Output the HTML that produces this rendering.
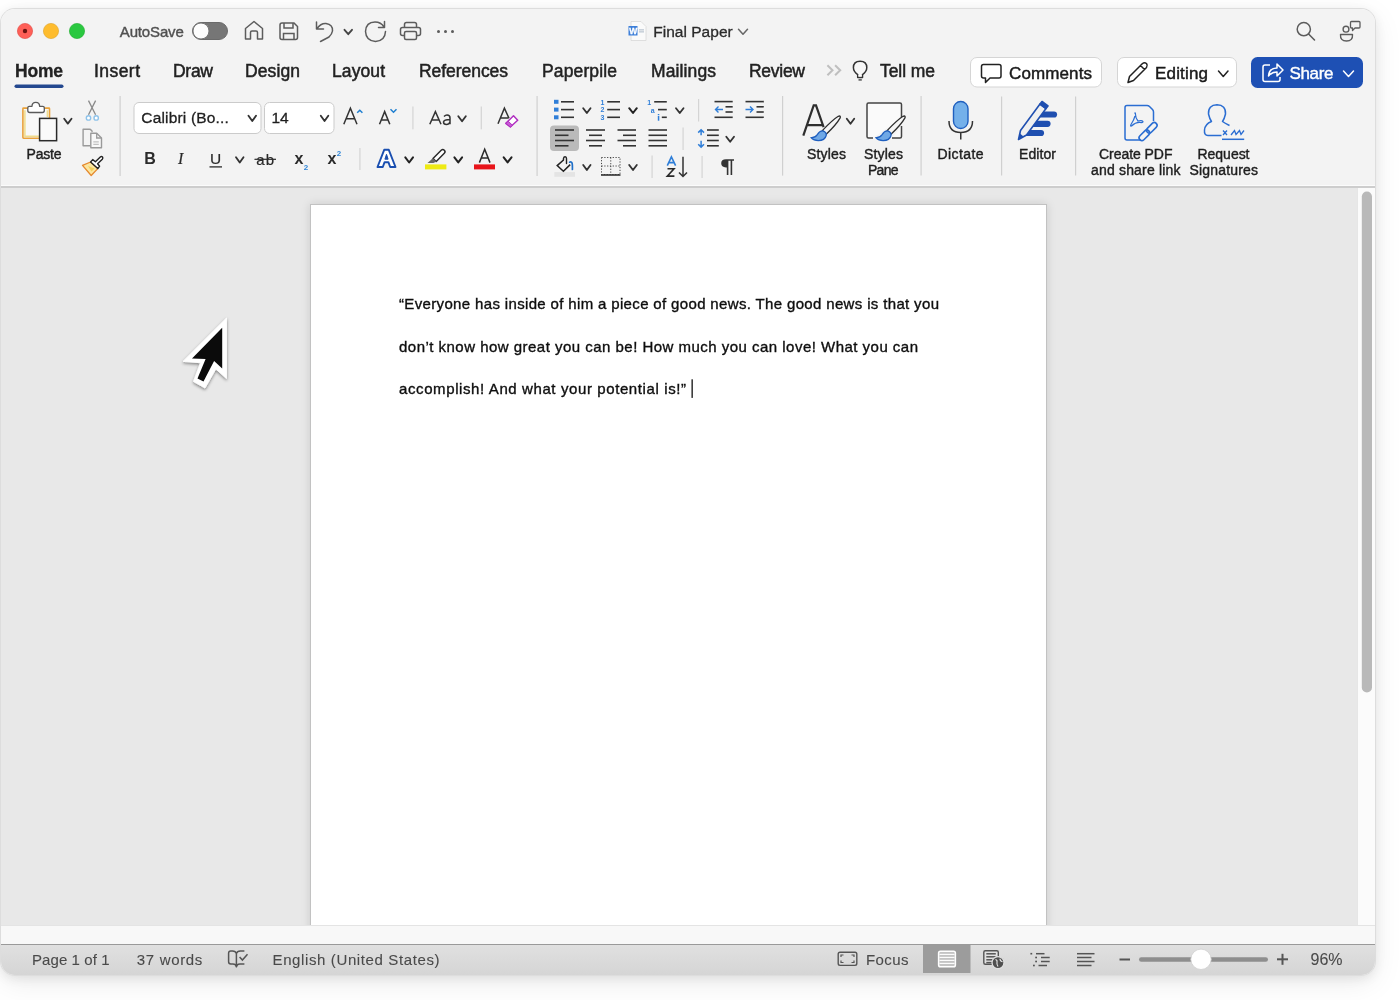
<!DOCTYPE html>
<html><head><meta charset="utf-8">
<style>
*{margin:0;padding:0;box-sizing:border-box}
html,body{width:1400px;height:1000px;overflow:hidden;background:#fff}
#shadow{position:absolute;left:1px;top:9px;width:1374px;height:966px;border-radius:14px;box-shadow:0 0 0 1px #dddddd,0 3px 12px rgba(0,0,0,.09),0 8px 30px rgba(0,0,0,.08)}
#win{position:absolute;left:1px;top:9px;width:1374px;height:966px;border-radius:14px;background:#f3f3f3;overflow:hidden}
#in{position:absolute;left:-1px;top:-9px;width:1400px;height:1000px}
.b{position:absolute}
svg{position:absolute;left:0;top:0;will-change:transform}
text{font-family:"Liberation Sans", sans-serif}
</style></head><body>
<div id="shadow"></div>
<div id="win"><div id="in">
<div class="b" style="left:0;top:185px;width:1400px;height:1px;background:#fbfbfb"></div>
<div class="b" style="left:0;top:186px;width:1400px;height:2px;background:#cdcdcd"></div>
<div class="b" style="left:0;top:188px;width:1357px;height:737px;background:#e8e8e8"></div>
<div class="b" style="left:1357px;top:188px;width:43px;height:737px;background:#fbfbfb;border-left:1px solid #e6e6e6"></div>
<div class="b" style="left:310px;top:204px;width:737px;height:740px;background:#fff;border:1px solid #c2c2c2;box-shadow:0 0 9px rgba(0,0,0,.13)"></div>
<div class="b" style="left:0;top:925px;width:1400px;height:19px;background:#f8f8f8;border-top:1px solid #e4e4e4"></div>
<div class="b" style="left:0;top:944px;width:1400px;height:31px;background:linear-gradient(#e0e0e0,#d5d5d5);border-top:1px solid #9a9a9a"></div>
<svg width="1400" height="1000" viewBox="0 0 1400 1000">
<defs><filter id="ptrsh" x="-50%" y="-50%" width="200%" height="200%"><feDropShadow dx="0" dy="1.5" stdDeviation="1.8" flood-color="#000" flood-opacity="0.45"/></filter></defs>
<circle cx="25" cy="31" r="7.6" fill="#fe5f57" stroke="#e0443e" stroke-width="0.6"/>
<circle cx="51" cy="31" r="7.6" fill="#febc2e" stroke="#dea123" stroke-width="0.6"/>
<circle cx="77" cy="31" r="7.6" fill="#2ac840" stroke="#1aab29" stroke-width="0.6"/>
<circle cx="25" cy="31" r="2.2" fill="#6b1410"/>
<text x="119.8" y="37" font-size="15" fill="#505050" font-weight="normal" text-anchor="start" textLength="64" lengthAdjust="spacing" stroke="#505050" stroke-width="0.4">AutoSave</text>
<rect x="192.5" y="22.5" width="35" height="17" rx="8.5" fill="#767676" stroke="#6a6a6a" stroke-width="1"/>
<circle cx="201" cy="31" r="8" fill="#fdfdfd" stroke="#777" stroke-width="1"/>
<path d="M245.5 39V28.5L254 21.5L262.5 28.5V39H257.5V32.5Q257.5 31 256 31H252Q250.5 31 250.5 32.5V39Z" fill="none" stroke="#5c5c5c" stroke-width="1.5" stroke-linejoin="round"/>
<path d="M282 23H294L297.5 26.5V37.5Q297.5 39.5 295.5 39.5H282Q280 39.5 280 37.5V25Q280 23 282 23Z" fill="none" stroke="#5c5c5c" stroke-width="1.5"/>
<path d="M284 23V28H293V23M283.5 39.5V33.5H294V39.5" fill="none" stroke="#5c5c5c" stroke-width="1.5"/>
<path d="M316.5 22V29H323.5M317 28.5Q321 23 326 23.5Q333 24.5 332.5 31Q332 34 329 37L320.5 41.5" fill="none" stroke="#5c5c5c" stroke-width="1.5" stroke-linecap="round" stroke-linejoin="round"/>
<path d="M344.5 29.8L348.25 34.2L352 29.8" fill="none" stroke="#444" stroke-width="1.85" stroke-linecap="round" stroke-linejoin="round"/>
<path d="M384 27Q381 22 375 22Q366 22 365.5 31.5Q366 41 375.5 41.5Q385 41 385.5 31.5M384.5 21.5V27.5H378.5" fill="none" stroke="#5c5c5c" stroke-width="1.5" stroke-linecap="round" stroke-linejoin="round"/>
<path d="M404.5 27.5V24.5Q404.5 22.5 406.5 22.5H414.5Q416.5 22.5 416.5 24.5V27.5M404 35.5H402.5Q400.5 35.5 400.5 33.5V29.5Q400.5 27.5 402.5 27.5H418.5Q420.5 27.5 420.5 29.5V33.5Q420.5 35.5 418.5 35.5H417" fill="none" stroke="#5c5c5c" stroke-width="1.5" stroke-linejoin="round"/>
<rect x="404.5" y="31.5" width="12" height="8" rx="1.5" fill="none" stroke="#5c5c5c" stroke-width="1.5"/>
<circle cx="438.5" cy="31.5" r="1.5" fill="#5c5c5c"/>
<circle cx="445.5" cy="31.5" r="1.5" fill="#5c5c5c"/>
<circle cx="452.5" cy="31.5" r="1.5" fill="#5c5c5c"/>
<path d="M631 21.5H641L646 26.5V40.5H631Z" fill="#fafafa" stroke="#d8d8d8" stroke-width="0.8"/>
<rect x="628.5" y="26" width="9" height="9.5" fill="#3d7fd9"/>
<text x="629.3" y="34.3" font-size="8.5" fill="#fff" font-weight="bold" text-anchor="start" stroke="#fff" stroke-width="0.3">W</text>
<rect x="639" y="29.5" width="5" height="0.8" fill="#9ab"/><rect x="639" y="31.5" width="5" height="0.8" fill="#9ab"/>
<text x="653.2" y="37.3" font-size="15.5" fill="#2a2a2a" font-weight="normal" text-anchor="start" textLength="79.5" lengthAdjust="spacing" stroke="#2a2a2a" stroke-width="0.3">Final Paper</text>
<path d="M738.5 29.3L743.0 34.3L747.5 29.3" fill="none" stroke="#666" stroke-width="1.5" stroke-linecap="round" stroke-linejoin="round"/>
<circle cx="1303.8" cy="29.2" r="6.6" fill="none" stroke="#5c5c5c" stroke-width="1.5"/>
<line x1="1308.6" y1="34" x2="1314.5" y2="40" stroke="#5c5c5c" stroke-width="1.6" stroke-linecap="round"/>
<circle cx="1346" cy="29.2" r="2.9" fill="none" stroke="#5c5c5c" stroke-width="1.4"/>
<path d="M1340.5 34.5H1352.5Q1353 41 1346.5 41Q1340 41 1340.5 34.5Z" fill="none" stroke="#5c5c5c" stroke-width="1.4" stroke-linejoin="round"/>
<path d="M1351.5 21.5H1359Q1360 21.5 1360 22.5V27Q1360 28 1359 28H1355L1352.5 30.5V28H1351.5Q1350.5 28 1350.5 27V22.5Q1350.5 21.5 1351.5 21.5Z" fill="none" stroke="#5c5c5c" stroke-width="1.3" stroke-linejoin="round"/>
<text x="15" y="77" font-size="17.5" fill="#222" font-weight="bold" text-anchor="start" textLength="48" lengthAdjust="spacing" stroke="#222" stroke-width="0.3">Home</text>
<rect x="14.5" y="84.5" width="49" height="3.5" rx="1.75" fill="#24488f"/>
<text x="94" y="77" font-size="17.5" fill="#222" font-weight="normal" text-anchor="start" textLength="46" lengthAdjust="spacing" stroke="#222" stroke-width="0.5">Insert</text>
<text x="173" y="77" font-size="17.5" fill="#222" font-weight="normal" text-anchor="start" textLength="40" lengthAdjust="spacing" stroke="#222" stroke-width="0.5">Draw</text>
<text x="245" y="77" font-size="17.5" fill="#222" font-weight="normal" text-anchor="start" textLength="55" lengthAdjust="spacing" stroke="#222" stroke-width="0.5">Design</text>
<text x="332" y="77" font-size="17.5" fill="#222" font-weight="normal" text-anchor="start" textLength="53" lengthAdjust="spacing" stroke="#222" stroke-width="0.5">Layout</text>
<text x="419" y="77" font-size="17.5" fill="#222" font-weight="normal" text-anchor="start" textLength="89" lengthAdjust="spacing" stroke="#222" stroke-width="0.5">References</text>
<text x="542" y="77" font-size="17.5" fill="#222" font-weight="normal" text-anchor="start" textLength="75" lengthAdjust="spacing" stroke="#222" stroke-width="0.5">Paperpile</text>
<text x="651" y="77" font-size="17.5" fill="#222" font-weight="normal" text-anchor="start" textLength="65" lengthAdjust="spacing" stroke="#222" stroke-width="0.5">Mailings</text>
<text x="749" y="77" font-size="17.5" fill="#222" font-weight="normal" text-anchor="start" textLength="56" lengthAdjust="spacing" stroke="#222" stroke-width="0.5">Review</text>
<text x="880" y="77" font-size="17.5" fill="#222" font-weight="normal" text-anchor="start" textLength="55" lengthAdjust="spacing" stroke="#222" stroke-width="0.5">Tell me</text>
<path d="M827.4 65.3L832.5 70.3L827.4 75.3M835.1 65.3L840.2 70.3L835.1 75.3" fill="none" stroke="#bfbfbf" stroke-width="2"/>
<path d="M857.7 77.6V74.6Q853.4 71.6 853.4 67.6Q853.4 61.2 860.1 61.2Q866.8 61.2 866.8 67.6Q866.8 71.6 862.5 74.6V77.6Z" fill="#f7f7f7" stroke="#333" stroke-width="1.5" stroke-linejoin="round"/>
<line x1="858.4" y1="75.8" x2="861.8" y2="75.8" stroke="#fff" stroke-width="1.2" stroke-linecap="butt"/>
<line x1="858.5" y1="79.9" x2="861.8" y2="79.9" stroke="#444" stroke-width="1.4" stroke-linecap="butt"/>
<rect x="970.5" y="57.5" width="131" height="29.5" rx="6.5" fill="#fff" stroke="#d5d5d5" stroke-width="1"/>
<path d="M983.5 64.5H999Q1001 64.5 1001 66.5V76Q1001 78 999 78H990L985.5 82.5V78H983.5Q981.5 78 981.5 76V66.5Q981.5 64.5 983.5 64.5Z" fill="none" stroke="#222" stroke-width="1.5" stroke-linejoin="round"/>
<text x="1009" y="79" font-size="17" fill="#1a1a1a" font-weight="normal" text-anchor="start" textLength="83" lengthAdjust="spacing" stroke="#1a1a1a" stroke-width="0.45">Comments</text>
<rect x="1117.5" y="57.5" width="119" height="29.5" rx="6.5" fill="#fff" stroke="#d5d5d5" stroke-width="1"/>
<path d="M1128 82.5L1129.5 76.5L1142.5 63.5Q1144.5 62 1146.5 63.5Q1148 65.5 1146.5 67.5L1133.5 80.5Z M1140.5 65.5L1144.5 69.5" fill="none" stroke="#222" stroke-width="1.5" stroke-linejoin="round"/>
<text x="1155" y="79" font-size="17" fill="#1a1a1a" font-weight="normal" text-anchor="start" textLength="53" lengthAdjust="spacing" stroke="#1a1a1a" stroke-width="0.45">Editing</text>
<path d="M1218.5 71L1223.25 76.5L1228 71" fill="none" stroke="#222" stroke-width="1.5" stroke-linecap="round" stroke-linejoin="round"/>
<rect x="1251" y="57" width="112" height="31" rx="6.5" fill="#1e50b4"/>
<path d="M1270 65H1265Q1263 65 1263 67V79.5Q1263 81.5 1265 81.5H1278Q1280 81.5 1280 79.5V77" fill="none" stroke="#fff" stroke-width="1.5" stroke-linejoin="round"/>
<path d="M1268.5 76Q1269 68 1277 68V64L1283 70L1277 76V72Q1271.5 72 1268.5 76Z" fill="none" stroke="#fff" stroke-width="1.5" stroke-linejoin="round"/>
<text x="1289.5" y="79" font-size="17" fill="#fff" font-weight="normal" text-anchor="start" textLength="44" lengthAdjust="spacing" stroke="#fff" stroke-width="0.4">Share</text>
<path d="M1343.5 71L1348.5 76.5L1353.5 71" fill="none" stroke="#fff" stroke-width="1.5" stroke-linecap="round" stroke-linejoin="round"/>
<rect x="22.9" y="108.1" width="26.6" height="30.1" rx="0.6" fill="#f8f8f8" stroke="#e9a23b" stroke-width="1.6"/>
<path d="M24.9 110.2V136.2H39M47.4 110.2V117" fill="none" stroke="#efdc8c" stroke-width="1.5"/>
<path d="M27.8 107.8V110.5Q27.8 112.5 29.8 112.5H42.3Q44.3 112.5 44.3 110.5V107.8Q44.3 106.3 42.8 106.3H39.6Q39.6 102.3 35.8 102.3Q32 102.3 32 106.3H29.3Q27.8 106.3 27.8 107.8Z" fill="#fff" stroke="#5a5a5a" stroke-width="1.3" stroke-linejoin="round"/>
<rect x="39.6" y="118.4" width="17" height="22.3" fill="#fafafa" stroke="#2a2a2a" stroke-width="1.5"/>
<path d="M64.2 118.8L67.85 123.6L71.5 118.8" fill="none" stroke="#333" stroke-width="1.85" stroke-linecap="round" stroke-linejoin="round"/>
<text x="26.5" y="159.2" font-size="14" fill="#1e1e1e" font-weight="normal" text-anchor="start" textLength="35" lengthAdjust="spacing" stroke="#1e1e1e" stroke-width="0.4">Paste</text>
<path d="M88.5 100.6L95.6 114.8M95.6 100.6L88.5 114.8" stroke="#8a8a8a" stroke-width="1.3" fill="none"/>
<circle cx="88.5" cy="117.9" r="2.2" fill="#fff" stroke="#8fc3ea" stroke-width="1.4"/><circle cx="96.2" cy="117.9" r="2.2" fill="#fff" stroke="#8fc3ea" stroke-width="1.4"/>
<path d="M90 145.7H83.1V129.3H89.5Q90.5 129.3 91.5 130.5L92.5 131.8" fill="none" stroke="#9a9a9a" stroke-width="1.4" stroke-linejoin="round"/>
<path d="M90.8 133.2H96.7L101.5 138V147.8H90.8Z" fill="#f8f8f8" stroke="#9a9a9a" stroke-width="1.4" stroke-linejoin="round"/>
<path d="M96.7 133.2V138H101.5" fill="none" stroke="#9a9a9a" stroke-width="1.3"/>
<path d="M93.3 141.9H98.8M93.3 144.3H98.8" stroke="#aaa" stroke-width="0.9"/>
<path d="M90.6 162L82.5 165.3L91.2 175.5L97.8 168.6Z" fill="#fbe6a0" stroke="#e5892e" stroke-width="1.3" stroke-linejoin="round"/>
<path d="M88 166L91.5 171.5L94.5 168.5Z" fill="#f4cf5a"/>
<path d="M90.6 162L92.7 159.6L95.4 161.8L100.3 157Q101.5 156 102.5 157Q103.3 158 102.3 159.2L97.6 163.8L99.6 166.2L97.8 168.6Z" fill="#fff" stroke="#222" stroke-width="1.4" stroke-linejoin="round"/>
<rect x="119.5" y="96" width="1.2" height="80" fill="#cfcfcf"/>
<rect x="134" y="102.5" width="127" height="31" rx="5" fill="#fff" stroke="#cbcbcb" stroke-width="1"/>
<text x="141.3" y="123.3" font-size="15.5" fill="#1e1e1e" font-weight="normal" text-anchor="start" textLength="87.5" lengthAdjust="spacing" stroke="#1e1e1e" stroke-width="0.3">Calibri (Bo...</text>
<path d="M248.5 115.8L252.25 121L256 115.8" fill="none" stroke="#333" stroke-width="1.85" stroke-linecap="round" stroke-linejoin="round"/>
<rect x="264.5" y="102.5" width="69.5" height="31" rx="5" fill="#fff" stroke="#cbcbcb" stroke-width="1"/>
<text x="271.5" y="123.3" font-size="15.5" fill="#1e1e1e" font-weight="normal" text-anchor="start" stroke="#1e1e1e" stroke-width="0.3">14</text>
<path d="M320.8 115.8L324.55 121L328.3 115.8" fill="none" stroke="#333" stroke-width="1.85" stroke-linecap="round" stroke-linejoin="round"/>
<path d="M343.8 124.3L350.4 108.2L357 124.3M346.044 118.826H354.756" fill="none" stroke="#333" stroke-width="1.5" stroke-linejoin="miter"/>
<path d="M357.2 112.8L359.8 110.2L362.4 112.8" fill="none" stroke="#1f7fd0" stroke-width="1.5"/>
<path d="M379.5 124.3L384.65 111.6L389.8 124.3M381.251 119.982H388.049" fill="none" stroke="#333" stroke-width="1.5" stroke-linejoin="miter"/>
<path d="M390.5 109.3L393.5 112.3L396.5 109.3" fill="none" stroke="#1f7fd0" stroke-width="1.5"/>
<rect x="412.3" y="106.5" width="1.2" height="22.80000000000001" fill="#d4d4d4"/>
<path d="M429.8 124.3L435.4 111.6L441 124.3M431.704 119.982H439.096" fill="none" stroke="#333" stroke-width="1.5" stroke-linejoin="miter"/>
<path d="M444 116.5Q445.5 115 447 115Q450 115 450 118V124.3M450 119.5Q444 119.5 443.5 122Q443.5 124.5 446.5 124.5Q449 124.5 450 122" fill="none" stroke="#333" stroke-width="1.5"/>
<path d="M458.3 116.3L462.05 121.2L465.8 116.3" fill="none" stroke="#333" stroke-width="1.85" stroke-linecap="round" stroke-linejoin="round"/>
<rect x="480.7" y="106.5" width="1.2" height="22.80000000000001" fill="#d4d4d4"/>
<path d="M498 123.8L504.4 108.2L509 118.2M500.8 118H508.5" fill="none" stroke="#333" stroke-width="1.5"/>
<path d="M513.5 115.8L517.7 120.3L510.3 127L505.8 123.4Z" fill="#fff" stroke="#b02fc0" stroke-width="1.5" stroke-linejoin="round"/>
<path d="M508.2 121.2L512.6 125.4L510.3 127L505.8 123.4Z" fill="#c85ad6" stroke="#b02fc0" stroke-width="1"/>
<text x="144.2" y="164.2" font-size="16" fill="#2a2a2a" font-weight="bold" text-anchor="start">B</text>
<text x="178" y="164.2" font-size="16" fill="#2a2a2a" font-weight="normal" text-anchor="start" stroke="#2a2a2a" stroke-width="0.2" style="font-family:Liberation Serif;font-style:italic">I</text>
<text x="210" y="164.2" font-size="15.5" fill="#2a2a2a" font-weight="normal" text-anchor="start" stroke="#2a2a2a" stroke-width="0.2">U</text>
<line x1="209.5" y1="166.9" x2="222" y2="166.9" stroke="#2a2a2a" stroke-width="1.3" stroke-linecap="butt"/>
<path d="M236 157.2L239.75 162.5L243.5 157.2" fill="none" stroke="#333" stroke-width="1.85" stroke-linecap="round" stroke-linejoin="round"/>
<text x="256.2" y="164.5" font-size="15" fill="#2a2a2a" font-weight="normal" text-anchor="start" textLength="18" lengthAdjust="spacing" stroke="#2a2a2a" stroke-width="0.2">ab</text>
<line x1="254.5" y1="159.3" x2="276" y2="159.3" stroke="#2a2a2a" stroke-width="1.2" stroke-linecap="butt"/>
<text x="294.5" y="164" font-size="16" fill="#2a2a2a" font-weight="bold" text-anchor="start">x</text>
<text x="303.8" y="169.6" font-size="8" fill="#2f86d8" font-weight="bold" text-anchor="start">2</text>
<text x="327.5" y="164" font-size="16" fill="#2a2a2a" font-weight="bold" text-anchor="start">x</text>
<text x="336.8" y="155.6" font-size="8" fill="#2f86d8" font-weight="bold" text-anchor="start">2</text>
<rect x="359.3" y="148" width="1.2" height="22" fill="#d4d4d4"/>
<path d="M377.5 167H382.8L384.6 162.2H388.4L390.2 167H395.5L388.8 149.8H384.2Z" fill="#fff" stroke="#1a4fb0" stroke-width="1.9" stroke-linejoin="round"/>
<path d="M384.9 159.2L386.5 154.3L388.1 159.2Z" fill="#1a4fb0" stroke="#1a4fb0" stroke-width="1"/>
<path d="M405.3 157.3L409.15 162.5L413 157.3" fill="none" stroke="#222" stroke-width="2" stroke-linecap="round" stroke-linejoin="round"/>
<path d="M433 158.5L441.2 150.3Q442.8 148.8 444.3 150.3Q445.8 151.8 444.3 153.3L436.2 161.5Z" fill="#fff" stroke="#2a2a2a" stroke-width="1.5" stroke-linejoin="round"/>
<path d="M432.8 158.2L427.5 163H433.5L436.5 161.5Z" fill="#666"/>
<rect x="425" y="164.4" width="21.4" height="5" fill="#eeea14"/>
<path d="M454.4 157.3L458.25 162.4L462.1 157.3" fill="none" stroke="#222" stroke-width="2" stroke-linecap="round" stroke-linejoin="round"/>
<path d="M479.4 162.6L484.7 149.2L490 162.6M481.202 158.04399999999998H488.198" fill="none" stroke="#2a2a2a" stroke-width="1.5" stroke-linejoin="miter"/>
<rect x="474" y="164.4" width="21" height="5" fill="#e8141a"/>
<path d="M503.7 157.3L507.6 162.4L511.5 157.3" fill="none" stroke="#222" stroke-width="2" stroke-linecap="round" stroke-linejoin="round"/>
<rect x="536.5" y="96" width="1.2" height="80" fill="#d0d0d0"/>
<rect x="554" y="99.8" width="4.5" height="4" fill="#2f7ed8"/>
<line x1="561" y1="101.8" x2="574" y2="101.8" stroke="#333" stroke-width="1.6" stroke-linecap="butt"/>
<rect x="554" y="107.6" width="4.5" height="4" fill="#2f7ed8"/>
<line x1="561" y1="109.6" x2="574" y2="109.6" stroke="#333" stroke-width="1.6" stroke-linecap="butt"/>
<rect x="554" y="115.3" width="4.5" height="4" fill="#2f7ed8"/>
<line x1="561" y1="117.3" x2="574" y2="117.3" stroke="#333" stroke-width="1.6" stroke-linecap="butt"/>
<path d="M583.2 108.2L586.85 113L590.5 108.2" fill="none" stroke="#333" stroke-width="1.85" stroke-linecap="round" stroke-linejoin="round"/>
<text x="600.6" y="104.5" font-size="7" fill="#2f7ed8" font-weight="bold" text-anchor="start">1</text>
<line x1="607.2" y1="101.8" x2="620" y2="101.8" stroke="#333" stroke-width="1.6" stroke-linecap="butt"/>
<text x="600.6" y="112.3" font-size="7" fill="#2f7ed8" font-weight="bold" text-anchor="start">2</text>
<line x1="607.2" y1="109.6" x2="620" y2="109.6" stroke="#333" stroke-width="1.6" stroke-linecap="butt"/>
<text x="600.6" y="120.0" font-size="7" fill="#2f7ed8" font-weight="bold" text-anchor="start">3</text>
<line x1="607.2" y1="117.3" x2="620" y2="117.3" stroke="#333" stroke-width="1.6" stroke-linecap="butt"/>
<path d="M629.2 108.2L633.0 113L636.8 108.2" fill="none" stroke="#222" stroke-width="2" stroke-linecap="round" stroke-linejoin="round"/>
<text x="647.3" y="104.7" font-size="7" fill="#2f7ed8" font-weight="bold" text-anchor="start">1</text>
<text x="650.8" y="112.6" font-size="7" fill="#2f7ed8" font-weight="bold" text-anchor="start">a</text>
<rect x="657.8" y="116" width="1.5" height="4.7" fill="#2f7ed8"/><rect x="657.8" y="114" width="1.5" height="1.2" fill="#2f7ed8"/>
<line x1="654.2" y1="101.8" x2="666.8" y2="101.8" stroke="#333" stroke-width="1.6" stroke-linecap="butt"/>
<line x1="658" y1="109.6" x2="666.8" y2="109.6" stroke="#333" stroke-width="1.6" stroke-linecap="butt"/>
<line x1="661.8" y1="117.3" x2="666.8" y2="117.3" stroke="#333" stroke-width="1.6" stroke-linecap="butt"/>
<path d="M676 108.2L679.75 113L683.5 108.2" fill="none" stroke="#333" stroke-width="1.85" stroke-linecap="round" stroke-linejoin="round"/>
<rect x="698.0" y="99" width="1.2" height="22.5" fill="#d4d4d4"/>
<line x1="714.5" y1="101.6" x2="732.7" y2="101.6" stroke="#333" stroke-width="1.6" stroke-linecap="butt"/>
<line x1="725.5" y1="106.8" x2="732.7" y2="106.8" stroke="#333" stroke-width="1.6" stroke-linecap="butt"/>
<line x1="725.5" y1="112" x2="732.7" y2="112" stroke="#333" stroke-width="1.6" stroke-linecap="butt"/>
<line x1="714.5" y1="117.3" x2="732.7" y2="117.3" stroke="#333" stroke-width="1.6" stroke-linecap="butt"/>
<path d="M723 109.5H715.5M718.5 106.5L715.5 109.5L718.5 112.5" fill="none" stroke="#2f7ed8" stroke-width="1.4"/>
<line x1="745.5" y1="101.6" x2="763.8" y2="101.6" stroke="#333" stroke-width="1.6" stroke-linecap="butt"/>
<line x1="756.5" y1="106.8" x2="763.8" y2="106.8" stroke="#333" stroke-width="1.6" stroke-linecap="butt"/>
<line x1="756.5" y1="112" x2="763.8" y2="112" stroke="#333" stroke-width="1.6" stroke-linecap="butt"/>
<line x1="745.5" y1="117.3" x2="763.8" y2="117.3" stroke="#333" stroke-width="1.6" stroke-linecap="butt"/>
<path d="M745.5 109.5H753M750 106.5L753 109.5L750 112.5" fill="none" stroke="#2f7ed8" stroke-width="1.4"/>
<rect x="550" y="125.5" width="29" height="25.5" rx="4" fill="#bababa"/>
<line x1="555" y1="130" x2="574" y2="130" stroke="#333" stroke-width="1.6" stroke-linecap="butt"/>
<line x1="555" y1="135.3" x2="568.5" y2="135.3" stroke="#333" stroke-width="1.6" stroke-linecap="butt"/>
<line x1="555" y1="140.5" x2="574" y2="140.5" stroke="#333" stroke-width="1.6" stroke-linecap="butt"/>
<line x1="555" y1="145.8" x2="568.5" y2="145.8" stroke="#333" stroke-width="1.6" stroke-linecap="butt"/>
<line x1="586" y1="130" x2="605" y2="130" stroke="#333" stroke-width="1.6" stroke-linecap="butt"/>
<line x1="589" y1="135.3" x2="602" y2="135.3" stroke="#333" stroke-width="1.6" stroke-linecap="butt"/>
<line x1="586" y1="140.5" x2="605" y2="140.5" stroke="#333" stroke-width="1.6" stroke-linecap="butt"/>
<line x1="589" y1="145.8" x2="602" y2="145.8" stroke="#333" stroke-width="1.6" stroke-linecap="butt"/>
<line x1="617.5" y1="130" x2="636" y2="130" stroke="#333" stroke-width="1.6" stroke-linecap="butt"/>
<line x1="623" y1="135.3" x2="636" y2="135.3" stroke="#333" stroke-width="1.6" stroke-linecap="butt"/>
<line x1="617.5" y1="140.5" x2="636" y2="140.5" stroke="#333" stroke-width="1.6" stroke-linecap="butt"/>
<line x1="623" y1="145.8" x2="636" y2="145.8" stroke="#333" stroke-width="1.6" stroke-linecap="butt"/>
<line x1="648.5" y1="130" x2="667" y2="130" stroke="#333" stroke-width="1.6" stroke-linecap="butt"/>
<line x1="648.5" y1="135.3" x2="667" y2="135.3" stroke="#333" stroke-width="1.6" stroke-linecap="butt"/>
<line x1="648.5" y1="140.5" x2="667" y2="140.5" stroke="#333" stroke-width="1.6" stroke-linecap="butt"/>
<line x1="648.5" y1="145.8" x2="667" y2="145.8" stroke="#333" stroke-width="1.6" stroke-linecap="butt"/>
<rect x="682.5" y="127.5" width="1.2" height="22.5" fill="#d4d4d4"/>
<path d="M701.1 130V135.2M698.2 132.6L701.1 129.7L704 132.6M701.1 140.8V147M698.2 144.2L701.1 147.1L704 144.2" fill="none" stroke="#2f7ed8" stroke-width="1.5"/>
<line x1="707" y1="130" x2="718.8" y2="130" stroke="#333" stroke-width="1.6" stroke-linecap="butt"/>
<line x1="707" y1="135.3" x2="718.8" y2="135.3" stroke="#333" stroke-width="1.6" stroke-linecap="butt"/>
<line x1="707" y1="140.5" x2="718.8" y2="140.5" stroke="#333" stroke-width="1.6" stroke-linecap="butt"/>
<line x1="707" y1="145.8" x2="718.8" y2="145.8" stroke="#333" stroke-width="1.6" stroke-linecap="butt"/>
<path d="M726.3 136.7L730.15 141.8L734 136.7" fill="none" stroke="#333" stroke-width="1.85" stroke-linecap="round" stroke-linejoin="round"/>
<rect x="554.3" y="172.1" width="20.7" height="4.7" fill="#e4e4e4"/>
<path d="M563.5 160L557.2 165.6L563.4 171.3L570.2 164.6" fill="none" stroke="#222" stroke-width="1.5" stroke-linejoin="miter"/>
<path d="M563.5 160V158.4Q563.8 156.7 565.1 156.7Q566.5 156.7 566.5 158.5V163.5" fill="none" stroke="#222" stroke-width="1.4" stroke-linecap="round"/>
<path d="M569.6 162.2Q571.2 161.4 572.1 163.2Q572.5 164.5 572.4 169.5" fill="none" stroke="#1f6fc8" stroke-width="1.7" stroke-linecap="round"/>
<path d="M583.2 165L586.85 170L590.5 165" fill="none" stroke="#333" stroke-width="1.85" stroke-linecap="round" stroke-linejoin="round"/>
<rect x="601.5" y="157.5" width="18.5" height="17" fill="none" stroke="#444" stroke-width="1" stroke-dasharray="1.2 1.6"/>
<path d="M610.75 157.5V174.5M601.5 166H620" fill="none" stroke="#444" stroke-width="1" stroke-dasharray="1.2 1.6"/>
<line x1="601" y1="175" x2="620.5" y2="175" stroke="#333" stroke-width="1.6" stroke-linecap="butt"/>
<path d="M629.2 165L633.0 170L636.8 165" fill="none" stroke="#333" stroke-width="1.85" stroke-linecap="round" stroke-linejoin="round"/>
<rect x="651.5" y="155.5" width="1.2" height="22.5" fill="#d4d4d4"/>
<path d="M667.3 165.7L671.4 156.8L675.6 165.7M668.8 162.6H674.1" fill="none" stroke="#2f7ed8" stroke-width="1.6"/>
<path d="M667.5 168.8H674L667.3 176.1H674.4" fill="none" stroke="#2a2a2a" stroke-width="1.6"/>
<path d="M683 156.8V176.5M679 172.4L683 176.5L687 172.4" fill="none" stroke="#333" stroke-width="1.5"/>
<rect x="701.5" y="156" width="1.2" height="22" fill="#d4d4d4"/>
<path d="M734 159.2H726Q721.2 159.2 721.2 163.3Q721.2 167.4 726 167.4H726.8V175H728.4V160.7H730.6V175H732.2V160.7H734Z" fill="#333"/>
<rect x="782.0" y="96" width="1.2" height="79.6" fill="#d0d0d0"/>
<path d="M803.3 135.6L813.7 105.4H816L823.6 127.2M806.6 125.1H823.8" fill="none" stroke="#2e2e2e" stroke-width="2.2"/>
<path d="M822.3 130.6Q833 119.5 838.3 116.3Q840.6 115.3 840.3 117.6Q836.5 124.5 826.2 134.2Z" fill="#f6f6f6" stroke="#2e2e2e" stroke-width="1.3" stroke-linejoin="round"/>
<path d="M811 137.6Q815 138 817.3 134.6Q819.8 130.6 823 130.9Q826.8 132.3 826.2 135.5Q824.8 140.6 818.3 140.6Q813.8 140.6 811 137.6Z" fill="#6fa8e6" stroke="#1f5fbf" stroke-width="1.3" stroke-linejoin="round"/>
<path d="M846.8 118.8L850.5 123.8L854.2 118.8" fill="none" stroke="#333" stroke-width="1.85" stroke-linecap="round" stroke-linejoin="round"/>
<text x="807" y="158.8" font-size="14" fill="#1e1e1e" font-weight="normal" text-anchor="start" textLength="39" lengthAdjust="spacing" stroke="#1e1e1e" stroke-width="0.4">Styles</text>
<path d="M873 138H868.5Q867 138 867 136.5V104.5Q867 103 868.5 103H900Q901.5 103 901.5 104.5V118M901.5 126V136.5Q901.5 138 900 138H892" fill="#fafafa" stroke="#444" stroke-width="1.5"/>
<path d="M887.0999999999999 130.6Q897.8 119.5 903.0999999999999 116.3Q905.4 115.3 905.0999999999999 117.6Q901.3 124.5 891.0 134.2Z" fill="#f6f6f6" stroke="#2e2e2e" stroke-width="1.3" stroke-linejoin="round"/>
<path d="M875.8 137.6Q879.8 138 882.0999999999999 134.6Q884.5999999999999 130.6 887.8 130.9Q891.5999999999999 132.3 891.0 135.5Q889.5999999999999 140.6 883.0999999999999 140.6Q878.5999999999999 140.6 875.8 137.6Z" fill="#6fa8e6" stroke="#1f5fbf" stroke-width="1.3" stroke-linejoin="round"/>
<text x="864" y="158.8" font-size="14" fill="#1e1e1e" font-weight="normal" text-anchor="start" textLength="39" lengthAdjust="spacing" stroke="#1e1e1e" stroke-width="0.4">Styles</text>
<text x="868" y="174.5" font-size="14" fill="#1e1e1e" font-weight="normal" text-anchor="start" textLength="30.5" lengthAdjust="spacing" stroke="#1e1e1e" stroke-width="0.4">Pane</text>
<rect x="920.5" y="96" width="1.2" height="79.5" fill="#d0d0d0"/>
<rect x="953.5" y="101.5" width="14.5" height="27" rx="7.25" fill="#74b0ea" stroke="#1f5fbf" stroke-width="1.4"/>
<path d="M949 121Q949 132.5 960.75 132.5Q972.5 132.5 972.5 121M960.75 132.5V139.5" fill="none" stroke="#333" stroke-width="1.5"/>
<text x="937.5" y="159.2" font-size="14" fill="#1e1e1e" font-weight="normal" text-anchor="start" textLength="46" lengthAdjust="spacing" stroke="#1e1e1e" stroke-width="0.4">Dictate</text>
<rect x="1001.0" y="96.5" width="1.2" height="79.0" fill="#d0d0d0"/>
<line x1="1040" y1="114.5" x2="1054" y2="114.5" stroke="#1f4fb0" stroke-width="6.2" stroke-linecap="round"/>
<line x1="1033.5" y1="123.8" x2="1047.5" y2="123.8" stroke="#1f4fb0" stroke-width="6.2" stroke-linecap="round"/>
<line x1="1027" y1="133" x2="1041" y2="133" stroke="#1f4fb0" stroke-width="6.2" stroke-linecap="round"/>
<path d="M1018.5 139.5L1020.5 130.5L1040 104L1046 108.5L1026.5 135Z" fill="#f0f0f0" stroke="#1f4fb0" stroke-width="1.6" stroke-linejoin="round"/>
<path d="M1040 104L1042 101.5L1048 106L1046 108.5Z" fill="#1f4fb0" stroke="#1f4fb0" stroke-width="1.6" stroke-linejoin="round"/>
<path d="M1018.5 139.5L1020 133.5L1023.5 136.5Z" fill="#1f4fb0"/>
<text x="1019" y="159.2" font-size="14" fill="#1e1e1e" font-weight="normal" text-anchor="start" textLength="37" lengthAdjust="spacing" stroke="#1e1e1e" stroke-width="0.4">Editor</text>
<rect x="1075.0" y="96.5" width="1.2" height="79.0" fill="#d0d0d0"/>
<path d="M1141 140H1127Q1125 140 1125 138V107.5Q1125 105.5 1127 105.5H1147Q1148.5 105.5 1149.5 106.5L1152.5 109.5Q1153.5 110.5 1153.5 112V121" fill="none" stroke="#2a6dd2" stroke-width="1.5"/>
<path d="M1135 116Q1134 120 1131 124.5Q1130 126.5 1131.5 126Q1136 122 1140 122.5Q1143 123 1143 121.5Q1142 120 1138 121Q1135.5 118 1135.5 114.5Q1135.5 112 1134.5 113.5" fill="none" stroke="#2a6dd2" stroke-width="1.2"/>
<g transform="rotate(-45 1148 131.5)"><rect x="1136.5" y="128.8" width="12.5" height="5.6" rx="2.8" fill="none" stroke="#2a6dd2" stroke-width="1.6"/><rect x="1147" y="128.8" width="12.5" height="5.6" rx="2.8" fill="none" stroke="#2a6dd2" stroke-width="1.6"/></g>
<text x="1099" y="159.2" font-size="14" fill="#1e1e1e" font-weight="normal" text-anchor="start" textLength="73.5" lengthAdjust="spacing" stroke="#1e1e1e" stroke-width="0.4">Create PDF</text>
<text x="1091" y="174.8" font-size="14" fill="#1e1e1e" font-weight="normal" text-anchor="start" textLength="89.5" lengthAdjust="spacing" stroke="#1e1e1e" stroke-width="0.4">and share link</text>
<path d="M1229.5 125.5Q1224.5 123 1222.5 121.5Q1224.5 118.5 1225.5 114Q1226 105 1217 104.8Q1208 105 1208.5 114Q1209.5 118.5 1211.5 121.5Q1205 124 1204.5 130Q1204 135.5 1208 135.5H1221.5" fill="none" stroke="#2a6dd2" stroke-width="1.5" stroke-linejoin="round"/>
<path d="M1223 130.5L1227 135M1227 130.5L1223 135M1231 135L1234.5 130.5L1236 134.5L1239.5 130.5L1241 134.5L1244 130.5" fill="none" stroke="#2a6dd2" stroke-width="1.3"/>
<line x1="1222" y1="139.3" x2="1244.2" y2="139.3" stroke="#2a6dd2" stroke-width="1.5" stroke-linecap="butt"/>
<text x="1197.5" y="159.2" font-size="14" fill="#1e1e1e" font-weight="normal" text-anchor="start" textLength="52" lengthAdjust="spacing" stroke="#1e1e1e" stroke-width="0.4">Request</text>
<text x="1189.5" y="174.8" font-size="14" fill="#1e1e1e" font-weight="normal" text-anchor="start" textLength="68.5" lengthAdjust="spacing" stroke="#1e1e1e" stroke-width="0.4">Signatures</text>
<text x="399" y="309.4" font-size="15" fill="#0e0e0e" font-weight="normal" text-anchor="start" textLength="540" lengthAdjust="spacing" stroke="#0e0e0e" stroke-width="0.35">“Everyone has inside of him a piece of good news. The good news is that you</text>
<text x="399" y="351.8" font-size="15" fill="#0e0e0e" font-weight="normal" text-anchor="start" textLength="519" lengthAdjust="spacing" stroke="#0e0e0e" stroke-width="0.35">don’t know how great you can be! How much you can love! What you can</text>
<text x="399" y="394.2" font-size="15" fill="#0e0e0e" font-weight="normal" text-anchor="start" textLength="287" lengthAdjust="spacing" stroke="#0e0e0e" stroke-width="0.35">accomplish! And what your potential is!”</text>
<rect x="691.5" y="379.3" width="1.3" height="18.6" fill="#111"/>
<g filter="url(#ptrsh)"><path d="M226.5 318L226.5 378.5L215.8 369L205 388L193.5 381.5L200.5 362.7L183 361.4Z" fill="#fff" stroke="#fff" stroke-width="0.8" stroke-linejoin="round"/></g>
<path d="M222.2 327.8L222.2 368.6L214.1 361L203.5 381.4L197.5 378.4L205.6 358.9L192 358.4Z" fill="#0b0b0b"/>
<rect x="1361.8" y="191.5" width="10.2" height="501" rx="5.1" fill="#b9b9b9"/>
<text x="32" y="964.6" font-size="15" fill="#4a4a4a" font-weight="normal" text-anchor="start" textLength="77.5" lengthAdjust="spacing" stroke="#4a4a4a" stroke-width="0.1">Page 1 of 1</text>
<text x="136.8" y="964.6" font-size="15" fill="#4a4a4a" font-weight="normal" text-anchor="start" textLength="65.5" lengthAdjust="spacing" stroke="#4a4a4a" stroke-width="0.1">37 words</text>
<path d="M236.4 953.5Q235.6 951 232.5 951H230.8Q228.6 951 228.6 953.2V961.8Q228.6 964 230.8 964H233Q235.8 964 236.4 966.8Q237 964 239.8 964H244.4M236.4 953.5Q237.2 951 240.3 951H244.4M236.4 953.5V966" fill="none" stroke="#555" stroke-width="1.5" stroke-linejoin="round"/>
<path d="M239.6 956.9L242.4 960L247.5 954.2" fill="none" stroke="#555" stroke-width="1.5"/>
<text x="272.5" y="964.6" font-size="15" fill="#4a4a4a" font-weight="normal" text-anchor="start" textLength="167" lengthAdjust="spacing" stroke="#4a4a4a" stroke-width="0.1">English (United States)</text>
<rect x="838.2" y="952.2" width="18.6" height="13.2" rx="1.8" fill="none" stroke="#555" stroke-width="1.4"/>
<path d="M841 957V955H843.5M851.5 955H854V957M854 960.5V962.5H851.5M843.5 962.5H841V960.5" fill="none" stroke="#555" stroke-width="1.2"/>
<text x="866" y="964.6" font-size="15" fill="#4a4a4a" font-weight="normal" text-anchor="start" textLength="42.5" lengthAdjust="spacing" stroke="#4a4a4a" stroke-width="0.1">Focus</text>
<rect x="923" y="944.5" width="47.5" height="28.5" fill="#9c9c9c"/>
<rect x="938.6" y="951.2" width="16.8" height="15.6" rx="1.8" fill="#c4c4c4" stroke="#fff" stroke-width="1.5"/>
<line x1="939.5" y1="954.4" x2="954.5" y2="954.4" stroke="#fff" stroke-width="1.1" stroke-linecap="butt"/>
<line x1="939.5" y1="957.4" x2="954.5" y2="957.4" stroke="#fff" stroke-width="1.1" stroke-linecap="butt"/>
<line x1="939.5" y1="960.4" x2="954.5" y2="960.4" stroke="#fff" stroke-width="1.1" stroke-linecap="butt"/>
<line x1="939.5" y1="963.4" x2="954.5" y2="963.4" stroke="#fff" stroke-width="1.1" stroke-linecap="butt"/>
<rect x="983.8" y="950.8" width="14.5" height="13.4" rx="1.5" fill="#e2e2e2" stroke="#555" stroke-width="1.4"/>
<line x1="986.3" y1="953.8" x2="995.8" y2="953.8" stroke="#555" stroke-width="1.5" stroke-linecap="butt"/>
<line x1="986.3" y1="956.8" x2="995.8" y2="956.8" stroke="#555" stroke-width="1.5" stroke-linecap="butt"/>
<line x1="986.3" y1="959.8" x2="995.8" y2="959.8" stroke="#555" stroke-width="1.5" stroke-linecap="butt"/>
<line x1="986.3" y1="962.6" x2="995.8" y2="962.6" stroke="#555" stroke-width="1.5" stroke-linecap="butt"/>
<circle cx="998" cy="962.6" r="6" fill="#505050" stroke="#e0e0e0" stroke-width="1.3"/>
<path d="M995.5 959.5Q997.5 960 997 962Q996.5 964 998 966.5M1000 958.8Q999.8 961 1002.5 961.8" fill="none" stroke="#e8e8e8" stroke-width="1.1"/>
<rect x="1030.4" y="952.9000000000001" width="1.8" height="1.6" fill="#555"/>
<line x1="1036" y1="953.7" x2="1044.5" y2="953.7" stroke="#555" stroke-width="1.5" stroke-linecap="butt"/>
<rect x="1035.2" y="956.7" width="1.8" height="1.6" fill="#555"/>
<line x1="1041" y1="957.5" x2="1049.7" y2="957.5" stroke="#555" stroke-width="1.5" stroke-linecap="butt"/>
<rect x="1035.2" y="960.7" width="1.8" height="1.6" fill="#555"/>
<line x1="1041" y1="961.5" x2="1049.7" y2="961.5" stroke="#555" stroke-width="1.5" stroke-linecap="butt"/>
<rect x="1033" y="964.7" width="1.8" height="1.6" fill="#555"/>
<line x1="1038.5" y1="965.5" x2="1047" y2="965.5" stroke="#555" stroke-width="1.5" stroke-linecap="butt"/>
<line x1="1077" y1="953.7" x2="1094.5" y2="953.7" stroke="#555" stroke-width="1.5" stroke-linecap="butt"/>
<line x1="1077" y1="957.5" x2="1091.5" y2="957.5" stroke="#555" stroke-width="1.5" stroke-linecap="butt"/>
<line x1="1077" y1="961.5" x2="1094.5" y2="961.5" stroke="#555" stroke-width="1.5" stroke-linecap="butt"/>
<line x1="1077" y1="965.5" x2="1091.5" y2="965.5" stroke="#555" stroke-width="1.5" stroke-linecap="butt"/>
<line x1="1119.5" y1="959.5" x2="1130" y2="959.5" stroke="#555" stroke-width="2" stroke-linecap="butt"/>
<rect x="1139" y="957.2" width="129" height="4.6" rx="2.3" fill="#8e8e8e"/>
<circle cx="1201" cy="959.3" r="10.2" fill="#fff" stroke="#cfcfcf" stroke-width="0.8"/>
<line x1="1277" y1="959.3" x2="1288" y2="959.3" stroke="#555" stroke-width="2" stroke-linecap="butt"/>
<line x1="1282.5" y1="953.8" x2="1282.5" y2="964.8" stroke="#555" stroke-width="2" stroke-linecap="butt"/>
<text x="1310.5" y="964.6" font-size="16" fill="#4a4a4a" font-weight="normal" text-anchor="start" stroke="#4a4a4a" stroke-width="0.1">96%</text>
</svg>
</div></div>
</body></html>
